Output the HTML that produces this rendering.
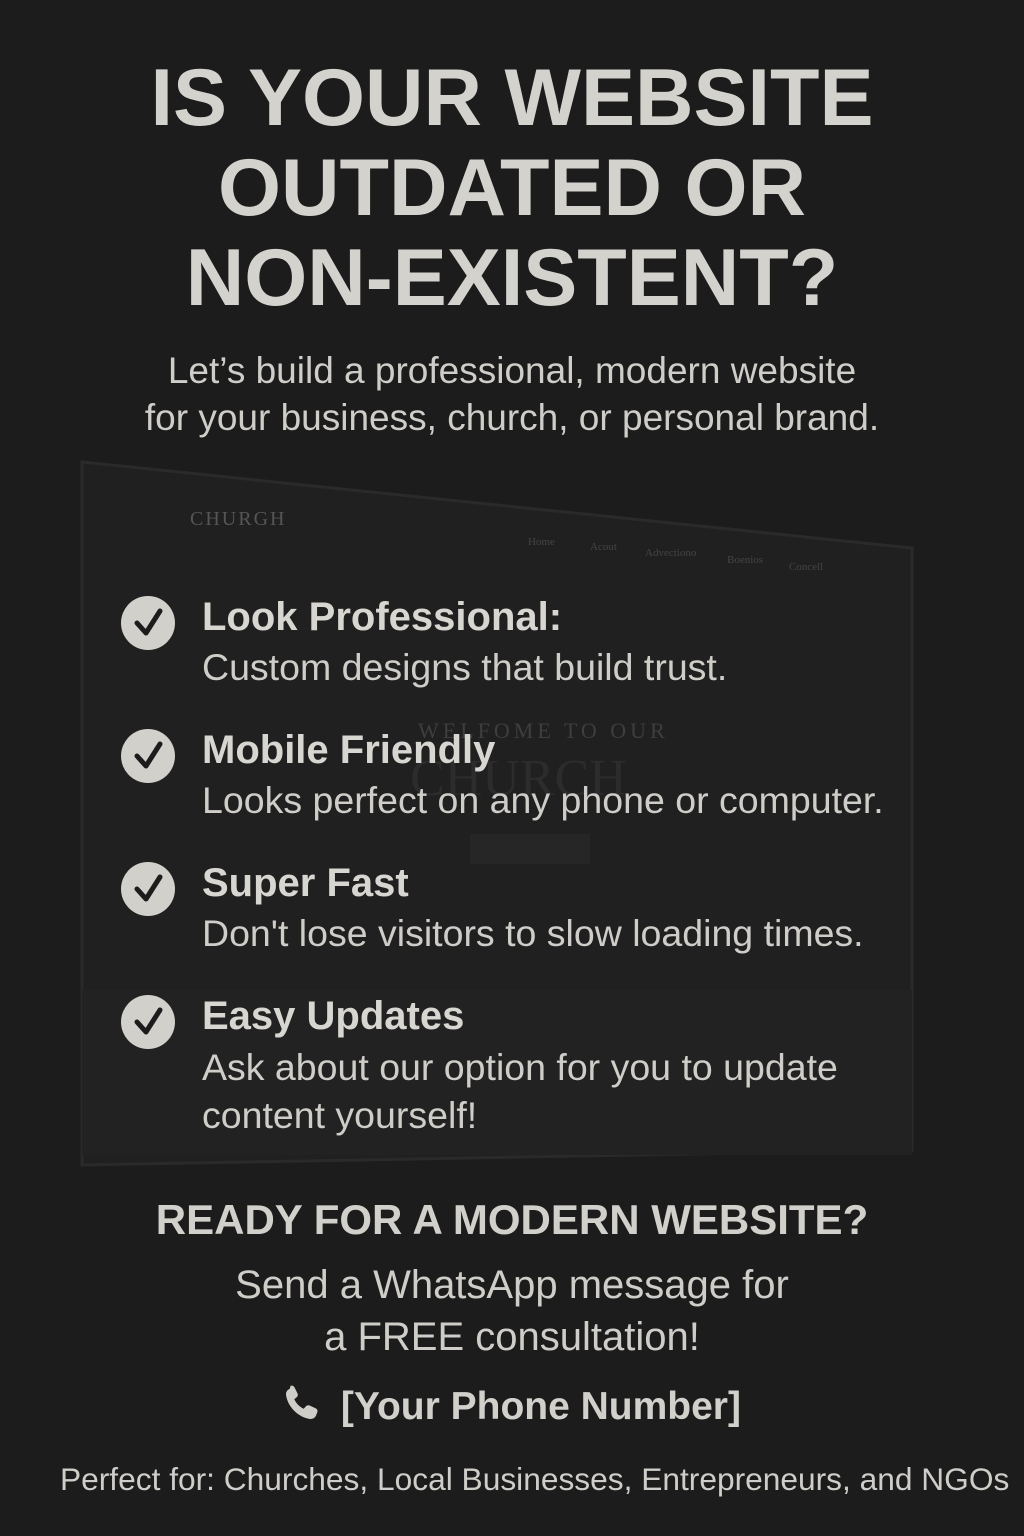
<!DOCTYPE html>
<html><head><meta charset="utf-8"><style>
html,body{margin:0;padding:0;background:#1c1c1c;}
body{width:1024px;height:1536px;position:relative;overflow:hidden;font-family:"Liberation Sans",sans-serif;color:#d6d4ce;}
.a{position:absolute;white-space:nowrap;}
.c{left:0;width:1024px;text-align:center;}
h1{margin:0;font-size:81px;line-height:90px;font-weight:bold;color:#d4d2cc;}
.sub{font-size:37px;line-height:47px;color:#cfcdc7;}
.t{font-weight:bold;font-size:40px;color:#d8d6d0;}
.d{font-size:37.5px;color:#cfcdc7;}
.ic{position:absolute;left:121px;width:54px;height:54px;border-radius:50%;background:#d2d0ca;}
</style></head><body>
<svg class="a" style="left:0;top:0" width="1024" height="1536">
<polygon points="82,462 912,548 912,1150 82,1165" fill="#202020" stroke="#2a2a2a" stroke-width="3"/>
<rect x="82" y="990" width="830" height="165" fill="#222"/>
<text x="190" y="525" font-family="Liberation Serif" font-size="20" fill="#555" letter-spacing="2">CHURGH</text>
<text x="418" y="738" font-family="Liberation Serif" font-size="22" fill="#3e3e3e" letter-spacing="4">WELFOME TO OUR</text>
<text x="410" y="795" font-family="Liberation Serif" font-size="52" fill="#2c2c2c">CHURCH</text>
<rect x="470" y="834" width="120" height="30" fill="#262626"/>
<g font-family="Liberation Serif" font-size="11" fill="#444">
<text x="528" y="545">Home</text><text x="590" y="550">Acout</text><text x="645" y="556">Advectiono</text><text x="727" y="563">Boenios</text><text x="789" y="570">Concell</text></g>
</svg>
<div class="a c" style="top:53px"><h1>IS YOUR WEBSITE<br>OUTDATED OR<br>NON-EXISTENT?</h1></div>
<div class="a c sub" style="top:347px">Let’s build a professional, modern website<br>for your business, church, or personal brand.</div>

<div class="ic" style="top:596px"></div>
<div class="ic" style="top:729px"></div>
<div class="ic" style="top:862px"></div>
<div class="ic" style="top:995px"></div>
<svg class="a" style="left:0;top:0" width="1024" height="1100">
<g fill="none" stroke="#1c1c1c" stroke-width="5" stroke-linecap="round" stroke-linejoin="round">
<path d="M137 623 L146 633 L160 611"/><path d="M137 756 L146 766 L160 744"/><path d="M137 889 L146 899 L160 877"/><path d="M137 1022 L146 1032 L160 1010"/>
</g></svg>

<div class="a t" style="left:202px;top:595px">Look Professional:</div>
<div class="a d" style="left:202px;top:646px">Custom designs that build trust.</div>
<div class="a t" style="left:202px;top:728px">Mobile Friendly</div>
<div class="a d" style="left:202px;top:779px">Looks perfect on any phone or computer.</div>
<div class="a t" style="left:202px;top:861px">Super Fast</div>
<div class="a d" style="left:202px;top:912px">Don't lose visitors to slow loading times.</div>
<div class="a t" style="left:202px;top:994px">Easy Updates</div>
<div class="a d" style="left:202px;top:1043px;line-height:48px">Ask about our option for you to update<br>content yourself!</div>

<div class="a c" style="top:1196px;font-weight:bold;font-size:42px;color:#d2d0ca">READY FOR A MODERN WEBSITE?</div>
<div class="a c" style="top:1259px;font-size:40px;line-height:52px;color:#cfcdc7">Send a WhatsApp message for<br>a FREE consultation!</div>
<div class="a" style="left:278px;top:1381px;font-weight:bold;font-size:39px;color:#d2d0ca">
<svg width="46" height="46" viewBox="0 0 24 24" style="vertical-align:-8px"><path d="M6.6 2.5c.8-.3 1.6 0 2 .8l1.6 3.2c.3.7.1 1.4-.4 1.9l-1.3 1.1c1 2.2 2.7 3.9 4.9 5l1.2-1.3c.5-.5 1.2-.7 1.9-.4l3.2 1.5c.8.4 1.1 1.2.8 2l-.6 1.6c-.5 1.3-1.8 2.1-3.2 1.9C10.6 19 5 13.4 4.2 7.3 4 5.9 4.8 4.6 6.1 4.1z" fill="#cfcdc7"/></svg>
<span style="margin-left:6px">[Your Phone Number]</span></div>
<div class="a" style="left:60px;top:1461px;font-size:31.7px;color:#cfcdc7">Perfect for: Churches, Local Businesses, Entrepreneurs, and NGOs</div>
</body></html>
